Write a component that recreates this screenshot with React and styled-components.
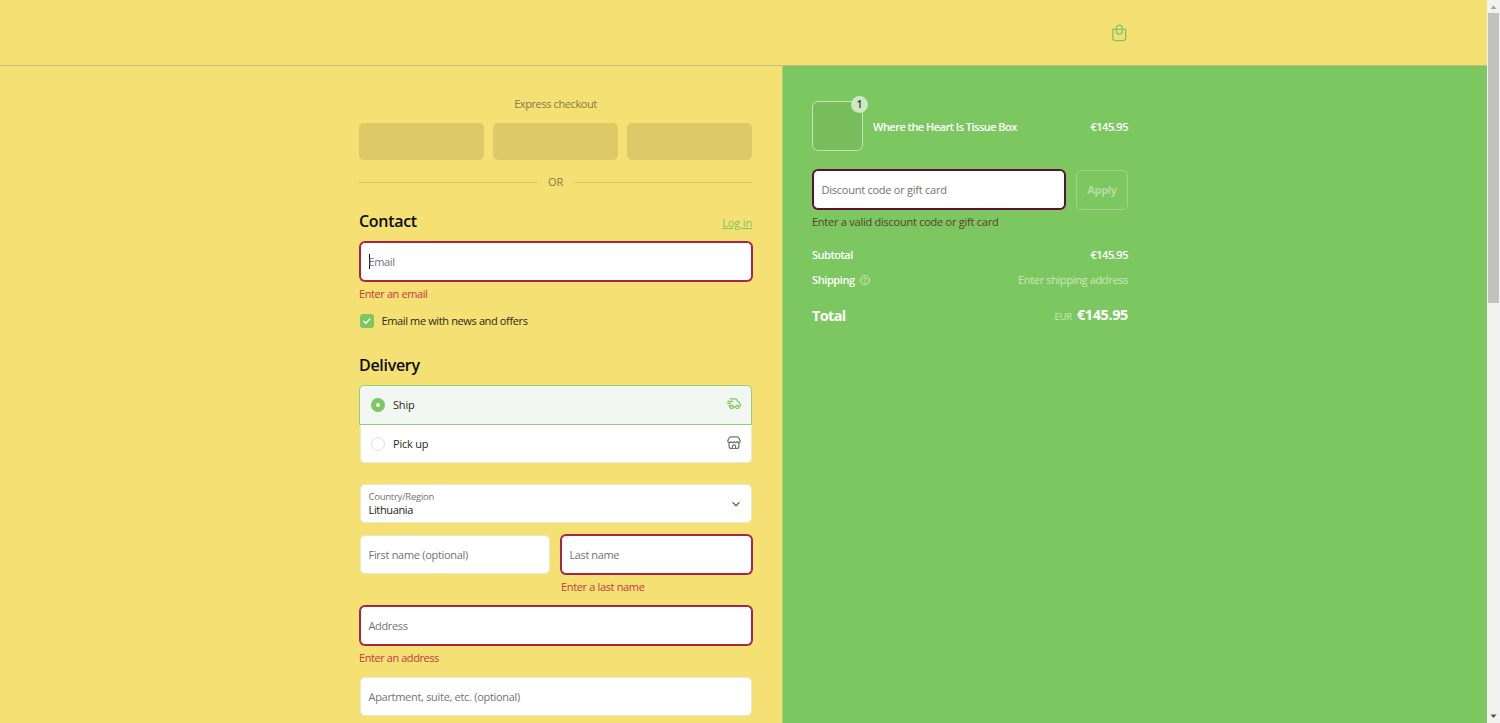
import React, { useState } from 'react';
import styled, { createGlobalStyle } from 'styled-components';

const GlobalStyle = createGlobalStyle`
  * {
    box-sizing: border-box;
  }
  body {
    margin: 0;
    overflow: hidden;
    font-family: 'Segoe UI', 'Open Sans', 'Noto Sans', sans-serif;
    font-size: 11px;
    line-height: 16px;
    color: #2a2a18;
  }
`;

const Window = styled.div`
  display: flex;
  height: 723px;
  overflow: hidden;
`;

const Page = styled.div`
  display: flex;
  flex-direction: column;
  flex: 1;
  background-color: #f5e074;
`;

const Header = styled.header`
  display: flex;
  justify-content: flex-end;
  height: 66px;
  padding: 24px 359.5px 0 0;
  border-bottom: 1px solid #c4bb8c;
`;

const CartButton = styled.a`
  width: 17px;
  height: 19px;
  color: #7cc75f;
`;

const Columns = styled.div`
  display: flex;
  flex: 1;
`;

const Main = styled.main`
  width: 782px;
  padding: 30px 30px 0 359px;
`;

const Aside = styled.aside`
  flex: 1;
  padding: 35px 359px 0 29px;
  background-color: #7cc75f;
  border-left: 1px solid #a5cf7d;
  color: #ffffff;
`;

const Text = styled.span`
  color: ${({ $color }) => $color || 'inherit'};
  font-size: ${({ $size }) => $size || '11px'};
  font-weight: ${({ $weight }) => $weight || 400};
  letter-spacing: ${({ $spacing }) => $spacing || '-0.35px'};
  white-space: nowrap;
`;

const ExpressTitle = styled.div`
  text-align: center;
  color: #857a43;
`;

const ExpressButtons = styled.div`
  display: grid;
  grid-template-columns: repeat(3, 1fr);
  gap: 9px;
  margin-top: 11px;
`;

const ExpressButton = styled.div`
  height: 37px;
  border-radius: 5px;
  background-color: #ddc967;
`;

const Divider = styled.div`
  display: flex;
  align-items: center;
  gap: 11px;
  margin-top: 14px;
  color: #857a43;
  &::before,
  &::after {
    content: '';
    flex: 1;
    height: 1px;
    background-color: #d6c878;
  }
`;

const SectionHeader = styled.div`
  display: flex;
  justify-content: space-between;
  align-items: center;
  height: 24px;
  margin-top: ${({ $top }) => $top};
`;

const SectionTitle = styled.h2`
  margin: 0;
  font-size: 16px;
  font-weight: 600;
  line-height: 24px;
  letter-spacing: -0.3px;
  color: #0b0b05;
`;

const LoginLink = styled.a`
  margin-top: 4px;
  color: #7cc75f;
  text-decoration: underline;
`;

const Field = styled.div`
  display: flex;
  align-items: center;
  height: 39px;
  margin: ${({ $top }) => $top || '0'} 0 0 1px;
  padding: 0 9px 0 7.5px;
  background-color: #ffffff;
  border: 1px solid ${({ $border }) => $border || '#ebe7d2'};
  border-radius: 5px;
  box-shadow: ${({ $border }) => ($border ? `0 0 0 1px ${$border}` : 'none')};
  color: #737373;
`;

const Caret = styled.i`
  width: 1px;
  height: 15px;
  margin-right: -1px;
  background-color: #111111;
`;

const ErrorText = styled.div`
  margin-top: 5px;
  padding-left: ${({ $indent }) => $indent || '0'};
  color: ${({ $dark }) => ($dark ? '#5b3c31' : '#c33a42')};
`;

const CheckboxRow = styled.label`
  display: flex;
  align-items: center;
  gap: 7.5px;
  margin-top: 11px;
  padding-left: 1px;
  height: 16px;
`;

const Checkbox = styled.span`
  display: flex;
  align-items: center;
  justify-content: center;
  width: 14px;
  height: 14px;
  border-radius: 3px;
  background-color: #7cc75f;
`;

const OptionList = styled.div`
  margin: 8px 0 0;
`;

const Option = styled.label`
  display: flex;
  align-items: center;
  height: ${({ $active }) => ($active ? '40px' : '38px')};
  margin-left: ${({ $active }) => ($active ? '0' : '1px')};
  padding: 0 11px;
  background-color: ${({ $active }) => ($active ? '#f2f7f2' : '#ffffff')};
  border: 1px solid ${({ $active }) => ($active ? '#8fcf76' : '#ece8d6')};
  border-top-width: ${({ $active }) => ($active ? '1px' : '0')};
  border-radius: ${({ $active }) => ($active ? '5px 5px 0 0' : '0 0 5px 5px')};
`;

const Radio = styled.span`
  width: 14px;
  height: 14px;
  margin-right: 8px;
  margin-left: ${({ $active }) => ($active ? '0' : '-1px')};
  border-radius: 50%;
  background-color: #ffffff;
  border: ${({ $active }) => ($active ? '5px solid #7cc75f' : '1px solid #dedede')};
`;

const OptionIcon = styled.svg`
  width: 14px;
  height: 14px;
  margin: ${({ $lift }) => $lift || '-3px'} -0.5px 0 auto;
  color: ${({ $color }) => $color};
`;

const SelectField = styled(Field)`
  justify-content: space-between;
  padding-right: 10px;
`;

const SelectText = styled.div`
  display: flex;
  flex-direction: column;
  margin-top: -1px;
  line-height: 13px;
`;

const NameRow = styled.div`
  display: grid;
  grid-template-columns: 191px 192px;
  gap: 10px;
  margin-top: 12px;
`;

const Item = styled.div`
  display: flex;
  align-items: center;
  height: 50px;
`;

const ItemDetails = styled.div`
  display: flex;
  flex: 1;
  padding-top: 2px;
`;

const Thumbnail = styled.div`
  position: relative;
  width: 51px;
  height: 50px;
  margin-right: 10px;
  border: 1px solid #c3e4b5;
  border-radius: 6px;
  background-color: #77bd5b;
`;

const Quantity = styled.span`
  position: absolute;
  top: -6px;
  right: -6px;
  width: 17px;
  height: 17px;
  border-radius: 50%;
  background-color: #cde8c2;
  color: #2d3d28;
  font-size: 10px;
  font-weight: 600;
  line-height: 17px;
  text-align: center;
`;

const Price = styled.span`
  display: flex;
  align-items: baseline;
  gap: 5px;
  margin-left: auto;
`;

const DiscountRow = styled.div`
  display: grid;
  grid-template-columns: 253px 52px;
  gap: 11px;
  height: 39px;
  margin-top: 19px;
`;

const ApplyButton = styled.button`
  height: 40px;
  padding: 0 0 2px;
  border: 1px solid #9dd58a;
  border-radius: 5px;
  background-color: transparent;
  color: #b4dea2;
  font-family: inherit;
`;

const SummaryRow = styled.div`
  display: flex;
  align-items: center;
  height: 16px;
  margin-top: ${({ $top }) => $top};
`;

const HelpIcon = styled.svg`
  width: 10px;
  height: 10px;
  margin-left: 5px;
`;

const Scrollbar = styled.div`
  display: flex;
  flex-direction: column;
  align-items: center;
  width: 13px;
  background-color: #f1f1f1;
`;

const ScrollThumb = styled.div`
  width: 11px;
  height: 290px;
  margin-bottom: auto;
  background-color: #c1c1c1;
`;

const ScrollArrow = styled.svg`
  width: 13px;
  height: 13px;
  color: ${({ $color }) => $color};
`;

const BagIcon = () => (
  <svg width="17" height="19" viewBox="0 0 17 19" fill="none" stroke="currentColor" strokeWidth="1.3">
    <path d="M1.8 5.3h12.9v8.2a3.2 3.2 0 0 1-3.2 3.2H5a3.2 3.2 0 0 1-3.2-3.2z" strokeLinejoin="round" />
    <path d="M5.4 6.1V4a2.9 2.9 0 0 1 5.8 0v3.2a2.9 2.9 0 0 1-5.8 0z" />
  </svg>
);

const TruckIcon = () => (
  <OptionIcon $color="#7cc75f" viewBox="0 0 14 14" fill="none" stroke="currentColor" strokeWidth="1.2" strokeLinecap="round" strokeLinejoin="round">
    <path d="M3.2 1.9H8c.8 0 1.4.4 1.8 1l1.1 1.7 1.4.8c.7.4 1.1 1 1.1 1.8v1c0 .8-.5 1.4-1.3 1.5" />
    <path d="M.8 4.3h5M.8 6.4h3M2.1 8.2c0 .7.3 1.2.8 1.5M6.3 9.9h2.2" />
    <circle cx="4.7" cy="9.9" r="1.6" />
    <circle cx="10.3" cy="9.9" r="1.6" />
  </OptionIcon>
);

const StoreIcon = () => (
  <OptionIcon $color="#707070" $lift="-1px" viewBox="0 0 14 14" fill="none" stroke="currentColor" strokeWidth="1.2" strokeLinecap="round" strokeLinejoin="round">
    <path d="M4.1.9h5.800c.9 0 1.700.5 2.100 1.300l1.100 2.300c.4 1-.3 2.100-1.400 2.100-.8 0-1.400-.4-1.600-1.100-.3.700-.8 1.100-1.500 1.100S7.300 6.200 7 5.500c-.3.700-.900 1.100-1.600 1.100S4.200 6.200 3.900 5.500c-.2.700-.8 1.100-1.600 1.100-1.100 0-1.800-1.100-1.400-2.100L2 2.200C2.400 1.400 3.200.9 4.100.9z" />
    <path d="M2.100 6.800v3.400c0 1.400.9 2.300 2.300 2.300h5.200c1.400 0 2.300-.9 2.300-2.300V6.800M5.400 12.400v-2c0-.9.700-1.500 1.600-1.500s1.600.6 1.600 1.500v2" />
  </OptionIcon>
);

const App = () => {
  const [delivery, setDelivery] = useState('ship');

  return (
    <>
      <GlobalStyle />
      <Window>
        <Page>
          <Header>
            <CartButton><BagIcon /></CartButton>
          </Header>
          <Columns>
            <Main>
              <ExpressTitle><Text $spacing="-0.4px">Express checkout</Text></ExpressTitle>
              <ExpressButtons>
                <ExpressButton />
                <ExpressButton />
                <ExpressButton />
              </ExpressButtons>
              <Divider><Text $spacing="-0.1px">OR</Text></Divider>

              <SectionHeader $top="19px">
                <SectionTitle>Contact</SectionTitle>
                <LoginLink><Text $spacing="-0.15px">Log in</Text></LoginLink>
              </SectionHeader>
              <Field $top="9px" $border="#a92347">
                <Caret />
                <Text>Email</Text>
              </Field>
              <ErrorText><Text $spacing="-0.4px">Enter an email</Text></ErrorText>
              <CheckboxRow>
                <Checkbox>
                  <svg width="10" height="10" viewBox="0 0 10 10" fill="none" stroke="#ffffff" strokeWidth="1.4" strokeLinecap="round" strokeLinejoin="round">
                    <path d="M1.9 5.3l2 1.9 4-4.3" />
                  </svg>
                </Checkbox>
                <Text $spacing="-0.37px">Email me with news and offers</Text>
              </CheckboxRow>

              <SectionHeader $top="24px">
                <SectionTitle>Delivery</SectionTitle>
              </SectionHeader>
              <OptionList>
                <Option $active={delivery === 'ship'} onClick={() => setDelivery('ship')}>
                  <Radio $active={delivery === 'ship'} />
                  <Text $spacing="-0.2px">Ship</Text>
                  <TruckIcon />
                </Option>
                <Option $active={delivery === 'pickup'} onClick={() => setDelivery('pickup')}>
                  <Radio $active={delivery === 'pickup'} />
                  <Text $spacing="-0.2px">Pick up</Text>
                  <StoreIcon />
                </Option>
              </OptionList>

              <SelectField $top="21px">
                <SelectText>
                  <Text $size="9.5px" $spacing="-0.25px">Country/Region</Text>
                  <Text $color="#222222">Lithuania</Text>
                </SelectText>
                <svg width="10" height="10" viewBox="0 0 10 10" fill="none" stroke="#666666" strokeWidth="1.3" strokeLinecap="round" strokeLinejoin="round">
                  <path d="M2 3.8l3 3 3-3" />
                </svg>
              </SelectField>
              <NameRow>
                <div>
                  <Field><Text $spacing="-0.3px">First name (optional)</Text></Field>
                </div>
                <div>
                  <Field $border="#a92347"><Text $spacing="-0.4px">Last name</Text></Field>
                  <ErrorText $indent="1px"><Text>Enter a last name</Text></ErrorText>
                </div>
              </NameRow>
              <Field $top="11px" $border="#a92347"><Text>Address</Text></Field>
              <ErrorText><Text $spacing="-0.43px">Enter an address</Text></ErrorText>
              <Field $top="11px"><Text $spacing="-0.3px">Apartment, suite, etc. (optional)</Text></Field>
            </Main>

            <Aside>
              <Item>
                <Thumbnail><Quantity>1</Quantity></Thumbnail>
                <ItemDetails>
                  <Text $weight={600} $spacing="-0.52px">Where the Heart Is Tissue Box</Text>
                  <Price><Text $weight={600} $spacing="-0.45px">€145.95</Text></Price>
                </ItemDetails>
              </Item>
              <DiscountRow>
                <Field $border="#5e0f35"><Text $spacing="-0.25px">Discount code or gift card</Text></Field>
                <ApplyButton><Text $weight={700}>Apply</Text></ApplyButton>
              </DiscountRow>
              <ErrorText $dark><Text $spacing="-0.25px">Enter a valid discount code or gift card</Text></ErrorText>
              <SummaryRow $top="17px">
                <Text $weight={600} $spacing="-0.5px">Subtotal</Text>
                <Price><Text $weight={600} $spacing="-0.45px">€145.95</Text></Price>
              </SummaryRow>
              <SummaryRow $top="9px">
                <Text $weight={600} $spacing="-0.4px">Shipping</Text>
                <HelpIcon viewBox="0 0 10 10" fill="none" stroke="#d8edcf" strokeWidth="0.9" strokeLinecap="round">
                  <circle cx="5" cy="5" r="4.5" />
                  <path d="M3.7 3.9c.1-.8.6-1.2 1.3-1.2s1.3.4 1.3 1.1c0 .9-1.3 1-1.3 2M5 7.4v.1" />
                </HelpIcon>
                <Price><Text $color="#cbe9be">Enter shipping address</Text></Price>
              </SummaryRow>
              <SummaryRow $top="20px">
                <Text $size="14.5px" $weight={700} $spacing="-0.65px">Total</Text>
                <Price>
                  <Text $size="9.5px" $color="#cbe9be" $spacing="-0.2px">EUR</Text>
                  <Text $size="14.5px" $weight={700} $spacing="-0.4px">€145.95</Text>
                </Price>
              </SummaryRow>
            </Aside>
          </Columns>
        </Page>
        <Scrollbar>
          <ScrollArrow $color="#a3a3a3" viewBox="0 0 13 13"><path d="M3.5 9l3-3.5 3 3.5z" fill="currentColor" /></ScrollArrow>
          <ScrollThumb />
          <ScrollArrow $color="#505050" viewBox="0 0 13 13"><path d="M3.5 4.5l3 3.5 3-3.5z" fill="currentColor" /></ScrollArrow>
        </Scrollbar>
      </Window>
    </>
  );
};

export default App;
